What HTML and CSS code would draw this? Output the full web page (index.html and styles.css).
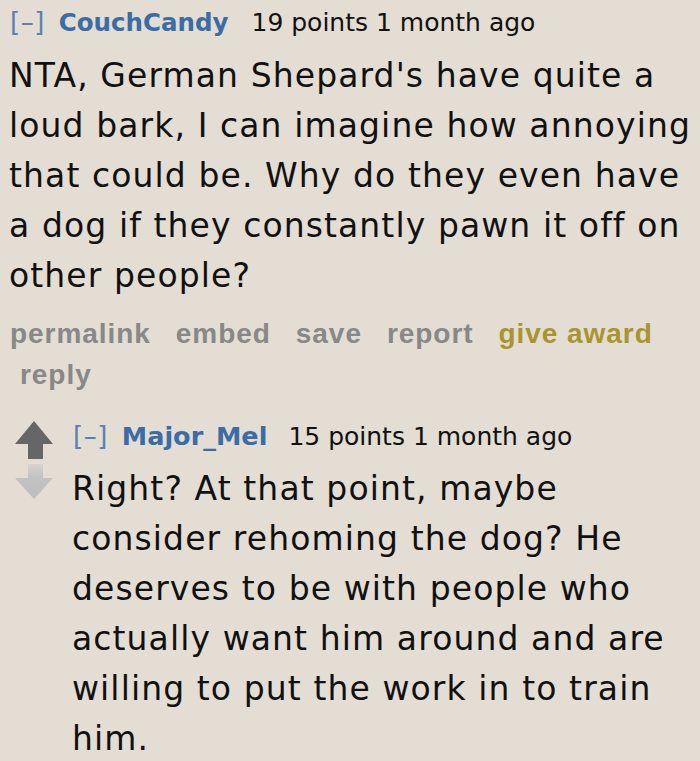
FILE: index.html
```html
<!DOCTYPE html>
<html>
<head>
<meta charset="utf-8">
<link rel="stylesheet" href="styles.css">
</head>
<body>
<div class="comment">
  <div class="tagline">
    <span class="toggle">[–]</span>
    <span class="author">CouchCandy</span>
    <span class="score">19 points 1 month ago</span>
  </div>
  <div class="body">NTA, German Shepard's have quite a loud bark, I can imagine how annoying that could be. Why do they even have a dog if they constantly pawn it off on other people?</div>
  <ul class="buttons">
    <li>permalink</li>
    <li>embed</li>
    <li>save</li>
    <li>report</li>
    <li class="award">give award</li>
    <li class="reply">reply</li>
  </ul>
  <div class="child">
    <div class="votes">
      <svg class="arrows" width="40" height="82" viewBox="0 0 40 82">
        <defs>
          <linearGradient id="dn" x1="0" y1="0" x2="0" y2="1">
            <stop offset="0" stop-color="#d6d3ce"/>
            <stop offset="0.4" stop-color="#c2c2c2"/>
            <stop offset="1" stop-color="#bdbdbd"/>
          </linearGradient>
        </defs>
        <path d="M19 3 L38 26 L28 26 L28 41 L13 41 L13 26 L0 26 Z" fill="#666666"/>
        <path d="M13 46 L28 46 L28 60 L38 60 L19 81 L0 60 L13 60 Z" fill="url(#dn)"/>
      </svg>
    </div>
    <div class="entry">
      <div class="tagline">
        <span class="toggle">[–]</span>
        <span class="author">Major_Mel</span>
        <span class="score">15 points 1 month ago</span>
      </div>
      <div class="body">Right? At that point, maybe consider rehoming the dog? He deserves to be with people who actually want him around and are willing to put the work in to train him.</div>
    </div>
  </div>
</div>
</body>
</html>
```
FILE: styles.css
```css
html, body {
  margin: 0;
  padding: 0;
  background: #e3ddd3;
}
body {
  font-family: "DejaVu Sans", Verdana, sans-serif;
  color: #111;
}
.comment {
  padding: 4px 0 0 9px;
}
.tagline {
  font-size: 25px;
  line-height: 36px;
  display: flex;
  align-items: baseline;
  white-space: nowrap;
}
.toggle {
  color: #5b80b6;
  font-size: 26px;
  letter-spacing: 0.5px;
  margin-left: 1px;
  margin-right: 14px;
}
.author {
  color: #3c6ca5;
  font-weight: bold;
  font-size: 24.5px;
  margin-right: 23px;
}
.entry .author {
  font-size: 25.5px;
  margin-right: 21px;
}
.score {
  color: #111;
}
.body {
  font-size: 33px;
  letter-spacing: 1.1px;
  line-height: 50px;
  margin-top: 10px;
  margin-right: -8px;
}
.buttons {
  list-style: none;
  margin: 12px 0 0 0;
  padding: 0 0 0 1px;
  display: flex;
  flex-wrap: wrap;
  font-family: "Liberation Sans", Arial, sans-serif;
  font-weight: bold;
  font-size: 28px;
  letter-spacing: 0.95px;
  line-height: 41px;
  color: #888888;
  width: 690px;
}
.buttons li {
  margin-right: 25px;
}
.buttons .reply {
  margin-left: 10px;
}
.buttons .award {
  color: #a8952e;
}
.child {
  display: flex;
  margin-top: 23px;
}
.votes {
  width: 63px;
  flex: none;
  padding-left: 6px;
  box-sizing: border-box;
}
.arrows {
  display: block;
}
.entry {
  flex: 1;
  min-width: 0;
}
.entry .body {
  margin-top: 9px;
}
```
